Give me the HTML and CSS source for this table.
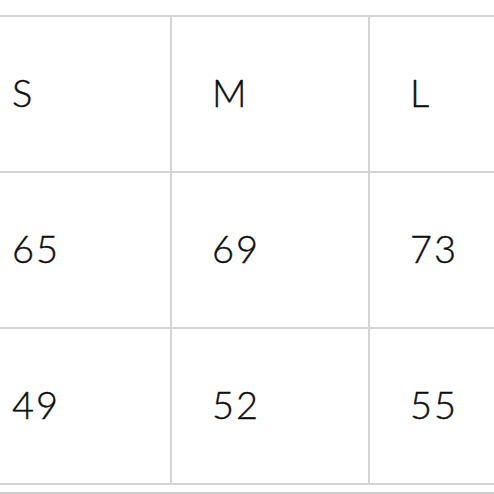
FILE: index.html
```html
<!DOCTYPE html>
<html>
<head>
<meta charset="utf-8">
<link rel="stylesheet" href="styles.css">
</head>
<body>
<div class="page">
  <div class="size-table">
    <div class="cell">S</div>
    <div class="cell">M</div>
    <div class="cell">L</div>
    <div class="cell num">65</div>
    <div class="cell num">69</div>
    <div class="cell num">73</div>
    <div class="cell num">49</div>
    <div class="cell num">52</div>
    <div class="cell num">55</div>
  </div>
  <div class="under-rule"></div>
</div>
</body>
</html>
```
FILE: styles.css
```css
html, body {
  margin: 0;
  padding: 0;
  background: #ffffff;
  overflow: hidden;
  width: 494px;
  height: 494px;
}
.page {
  padding-top: 15px;
  width: 494px;
  overflow: hidden;
}
.size-table {
  display: grid;
  grid-template-columns: 198px 196px 196px;
  grid-template-rows: 154px 154px 154px;
  gap: 2px;
  padding: 2px;
  margin-left: -30px;
  width: 596px;
  background: #d4d4d4;
}
.cell {
  background: #ffffff;
  display: flex;
  align-items: center;
  padding-left: 40px;
  padding-bottom: 4px;
  font-family: "Lato", "Noto Sans", sans-serif;
  font-weight: 300;
  font-size: 38px;
  color: #0e0e0e;
  -webkit-text-stroke: 0.4px #0e0e0e;
}
.num {
  letter-spacing: 2px;
}
.under-rule {
  margin-top: 7px;
  height: 2px;
  background: #cccccc;
}
```
